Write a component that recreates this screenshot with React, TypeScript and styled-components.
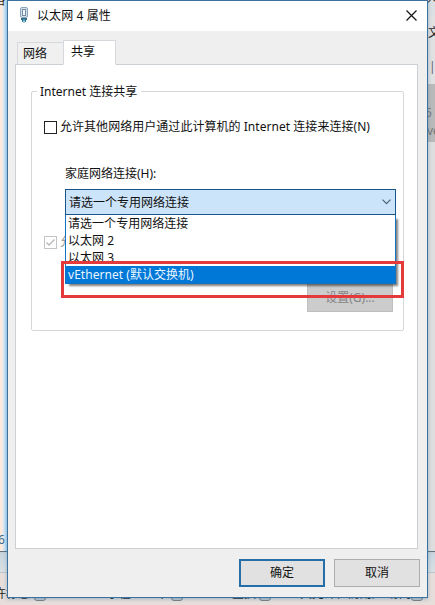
import { useState } from 'react';

import styled, { createGlobalStyle, css } from 'styled-components';

const GlobalStyle = createGlobalStyle`
  * {
    box-sizing: border-box;
  }

  body {
    background: #e6dfdb;
    color: #111;
    font-family: 'Noto Sans', 'Noto Sans CJK SC', sans-serif;
    font-size: 12px;
    line-height: 17px;
    margin: 0;
    overflow: hidden;
  }
`;

const Desktop = styled.div`
  height: 605px;
  overflow: hidden;
  position: relative;
  width: 435px;
`;

const BackWindow = styled.div<{ $side: 'left' | 'right' }>`
  border-bottom: 1px solid #62707c;
  height: 552px;
  position: absolute;
  top: 0;
  width: 8px;

  ${({ $side }) =>
    $side === 'left'
      ? css`
          background: linear-gradient(90deg, #ffe8dc 2px, #d2e9f8 4px, #a5cce9);
          left: 0;
        `
      : css`
          background: linear-gradient(
            #dce0e2 16px,
            #e1e1e1 16px,
            #e1e1e1 84px,
            #b9b9b9 84px,
            #b9b9b9 142px,
            #dedede 142px
          );
          right: 0;
        `}
`;

const Taskbar = styled.div`
  background: linear-gradient(#c7d5df, #dbe0e3 20px, #e7deda 21px);
  border-top: 1px solid #c7cfd5;
  bottom: 0;
  height: 53px;
  left: 0;
  position: absolute;
  width: 100%;
`;

const BackLine = styled.div`
  border-top: 1px solid #bdc5cb;
  left: 0;
  position: absolute;
  top: 572px;
  width: 100%;
`;

const BackText = styled.span<{ $x: number; $y: number; $color?: string }>`
  color: ${({ $color }) => $color ?? '#222'};
  left: ${({ $x }) => $x}px;
  line-height: 16px;
  position: absolute;
  top: ${({ $y }) => $y}px;
  white-space: nowrap;
`;

const BackCheck = styled.span<{ $x: number }>`
  background: #c3c8cc;
  border: 1px solid #7b8084;
  border-radius: 3px;
  height: 12px;
  left: ${({ $x }) => $x}px;
  position: absolute;
  top: 589px;
  width: 12px;
`;

const Window = styled.div`
  background: #efefef;
  border: 1px solid #3b719f;
  box-shadow: 0 1px 4px rgba(45, 110, 160, 0.4);
  display: flex;
  flex-direction: column;
  height: 598px;
  margin-left: 7px;
  position: relative;
  width: 421px;
`;

const TitleBar = styled.div`
  align-items: center;
  background: #fff;
  display: flex;
  flex: none;
  height: 30px;
  padding: 0 9px 2px 11px;
`;

const Title = styled.span`
  flex: 1;
  letter-spacing: 0.1px;
  padding-left: 8px;
`;

const CloseButton = styled.button`
  background: none;
  border: 0;
  height: 13px;
  padding: 0;
  width: 13px;

  svg {
    display: block;
  }
`;

const Body = styled.div`
  display: flex;
  flex: 1;
  flex-direction: column;
  padding: 9px 7px 10px 7px;
`;

const TabList = styled.div`
  align-items: flex-end;
  display: flex;
  height: 25px;
  margin-bottom: -1px;
  padding-left: 2px;
  z-index: 1;
`;

const Tab = styled.button<{ $active: boolean }>`
  background: ${({ $active }) => ($active ? '#fff' : '#f0f0f0')};
  border: 1px solid #d5d8dc;
  border-bottom-color: ${({ $active }) => ($active ? '#fff' : '#cbd0d5')};
  border-right-width: ${({ $active }) => ($active ? 1 : 0)}px;
  color: inherit;
  font: inherit;
  height: ${({ $active }) => ($active ? 25 : 23)}px;
  padding: 0 0 ${({ $active }) => ($active ? 3 : 0)}px
    ${({ $active }) => ($active ? 7 : 5)}px;
  text-align: left;
  width: ${({ $active }) => ($active ? 53 : 46)}px;
`;

const Page = styled.div`
  background: #fff;
  border: 1px solid #cbd0d5;
  height: 485px;
  padding: 26px 14px 0 15px;
  width: 403px;
`;

const Group = styled.fieldset`
  border: 1px solid #d7d7d7;
  border-radius: 2px;
  display: flex;
  flex-direction: column;
  height: 240px;
  margin: 0;
  min-width: 0;
  padding: 0;
  position: relative;
  width: 373px;
`;

const Legend = styled.div`
  background: #fff;
  height: 17px;
  margin: -9px 0 0 5px;
  padding: 0 3px;
  width: 104px;
`;

const CheckRow = styled.label<{ $disabled?: boolean }>`
  align-items: center;
  color: ${({ $disabled }) => ($disabled ? '#999' : 'inherit')};
  display: flex;
  gap: 3px;
  height: 17px;
  letter-spacing: 0.04px;
  padding-left: 12px;
  white-space: nowrap;
`;

const Box = styled.span<{ $disabled?: boolean }>`
  border: 1px solid ${({ $disabled }) => ($disabled ? '#c4c4c4' : '#222')};
  flex: none;
  height: 13px;
  margin-top: 2px;
  width: 13px;

  svg {
    display: block;
  }
`;

const FieldLabel = styled.div`
  padding-left: 33px;
`;

const Combo = styled.div`
  align-items: center;
  background: #cce4f9;
  border: 1px solid #1b568b;
  display: flex;
  height: 26px;
  justify-content: space-between;
  margin: 7px 0 0 33px;
  padding: 0 4px 0 3px;
  width: 331px;
`;

const Options = styled.ul`
  background: #fff;
  border: 1px solid #1173c1;
  border-top: 0;
  box-shadow: 3px 3px 2px -1px rgba(0, 0, 0, 0.5);
  left: 33px;
  list-style: none;
  margin: 0;
  padding: 0;
  position: absolute;
  top: 123px;
  width: 331px;
  z-index: 1;
`;

const Option = styled.li<{ $selected: boolean }>`
  background: ${({ $selected }) => ($selected ? '#0078d7' : '#fff')};
  color: ${({ $selected }) => ($selected ? '#e8f5ff' : 'inherit')};
  height: 17px;
  letter-spacing: 0.04px;
  line-height: 17px;
  padding-left: 2px;
`;

// red outline pointing at the option to pick
const Marker = styled.div`
  border: 3px solid #e43a3b;
  height: 37px;
  left: 29px;
  pointer-events: none;
  position: absolute;
  top: 169px;
  width: 343px;
  z-index: 2;
`;

const SettingsButton = styled.button`
  align-self: flex-end;
  background: #ccc;
  border: 1px solid #bfbfbf;
  color: #858585;
  font: inherit;
  height: 29px;
  margin: 33px 10px 0 0;
  padding: 0;
  width: 86px;
`;

const Footer = styled.div`
  display: flex;
  gap: 9px;
  justify-content: flex-end;
  margin-top: auto;
`;

const Button = styled.button<{ $primary?: boolean }>`
  background: #e1e1e1;
  border: ${({ $primary }) =>
    $primary ? '2px solid #246fa9' : '1px solid #adadad'};
  color: inherit;
  font: inherit;
  height: 28px;
  padding: 0 0 1px;
  width: 86px;
`;

const AdapterIcon = () => (
  <svg width="10" height="18" viewBox="0 0 10 18">
    <rect x="1.5" y="1.5" width="7" height="10" rx="1.5" fill="#d5e2ec" stroke="#8aa3b8" />
    <rect x="3.5" y="3.5" width="3" height="6" fill="#f3f8fb" stroke="#718ca3" />
    <path d="M2 12h6v2H7v2H6v-1.500H4V16H3v-2H2z" fill="#35728f" />
    <path d="M5 13v4" stroke="#449fba" />
  </svg>
);

const CloseIcon = () => (
  <svg width="13" height="13" viewBox="0 0 13 13">
    <path d="M1.500 1.500l10 10M11.500 1.500l-10 10" stroke="#111" strokeWidth="1.2" />
  </svg>
);

const ChevronIcon = () => (
  <svg width="9" height="6" viewBox="0 0 9 6">
    <path d="M.5.7l4 4 4-4" fill="none" stroke="#4d6272" strokeWidth="1.2" />
  </svg>
);

const CheckIcon = () => (
  <svg width="11" height="11" viewBox="0 0 11 11">
    <path d="M1.500 5.500l2.500 2.500 5.500-5.500" fill="none" stroke="#b5b5b5" strokeWidth="1.3" />
  </svg>
);

const tabs = ['网络', '共享'];

const connections = [
  '请选一个专用网络连接',
  '以太网 2',
  '以太网 3',
  'vEthernet (默认交换机)',
];

const App = () => {
  const [activeTab, setActiveTab] = useState(1);
  const [hovered, setHovered] = useState(3);

  return (
    <Desktop>
      <GlobalStyle />
      <BackWindow $side="left" />
      <BackWindow $side="right" />
      <Taskbar />
      <BackLine />
      <BackText $x={-7} $y={-7}>络</BackText>
      <BackText $x={-2} $y={532} $color="#376c92">6</BackText>
      <BackText $x={426} $y={-10}>共</BackText>
      <BackText $x={428} $y={25}>文</BackText>
      <BackText $x={429} $y={59} $color="#666">|</BackText>
      <BackText $x={425} $y={105} $color="#777">5</BackText>
      <BackText $x={427} $y={123} $color="#777">ve</BackText>
      <BackText $x={-6} $y={586}>许标志</BackText>
      <BackCheck $x={34} />
      <BackText $x={95} $y={586}>显示在XGS 中</BackText>
      <BackCheck $x={171} />
      <BackText $x={232} $y={586}>置换</BackText>
      <BackCheck $x={259} />
      <BackText $x={300} $y={586}>关允许位防用户 访问</BackText>
      <BackCheck $x={411} />

      <Window>
        <TitleBar>
          <AdapterIcon />
          <Title>以太网 4 属性</Title>
          <CloseButton aria-label="关闭">
            <CloseIcon />
          </CloseButton>
        </TitleBar>

        <Body>
          <TabList>
            {tabs.map((tab, index) => (
              <Tab
                key={tab}
                $active={index === activeTab}
                onClick={() => setActiveTab(index)}>
                {tab}
              </Tab>
            ))}
          </TabList>

          <Page>
            <Group>
              <Legend>Internet 连接共享</Legend>
              <CheckRow style={{ marginTop: 18 }}>
                <Box />
                允许其他网络用户通过此计算机的 Internet 连接来连接(N)
              </CheckRow>
              <FieldLabel style={{ marginTop: 30 }}>家庭网络连接(H):</FieldLabel>
              <Combo>
                {connections[0]}
                <ChevronIcon />
              </Combo>
              <Options>
                {connections.map((name, index) => (
                  <Option
                    key={name}
                    $selected={index === hovered}
                    onMouseEnter={() => setHovered(index)}>
                    {name}
                  </Option>
                ))}
              </Options>
              <CheckRow $disabled style={{ marginTop: 18 }}>
                <Box $disabled>
                  <CheckIcon />
                </Box>
                允
              </CheckRow>
              <SettingsButton disabled>设置(G)...</SettingsButton>
              <Marker />
            </Group>
          </Page>

          <Footer>
            <Button $primary>确定</Button>
            <Button>取消</Button>
          </Footer>
        </Body>
      </Window>
    </Desktop>
  );
};

export default App;
